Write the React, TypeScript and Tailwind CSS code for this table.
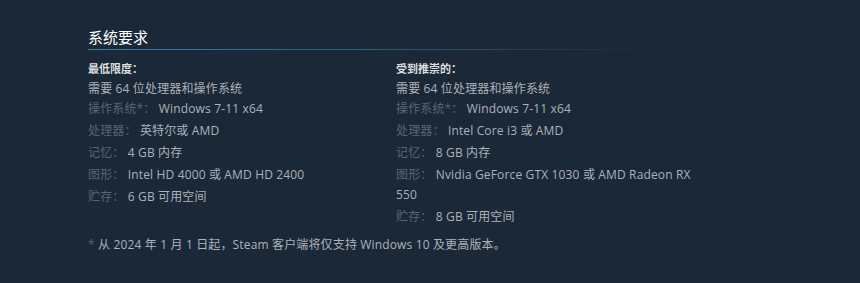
const minReqs: [string, string][] = [
  ["操作系统*：", "Windows 7-11 x64"],
  ["处理器：", "英特尔或 AMD"],
  ["记忆：", "4 GB 内存"],
  ["图形：", "Intel HD 4000 或 AMD HD 2400"],
  ["贮存：", "6 GB 可用空间"],
];

const recReqs: [string, string][] = [
  ["操作系统*：", "Windows 7-11 x64"],
  ["处理器：", "Intel Core i3 或 AMD"],
  ["记忆：", "8 GB 内存"],
  ["图形：", "Nvidia GeForce GTX 1030 或 AMD Radeon RX 550"],
  ["贮存：", "8 GB 可用空间"],
];

const ReqColumn = ({ title, rows }: { title: string; rows: [string, string][] }) => (
  <div className="pr-2">
    <div className="text-[11px] font-bold leading-5 tracking-normal text-[#dcdedf]">{title}</div>
    <ul>
      <li className="leading-5">需要 64 位处理器和操作系统</li>
      {rows.map(([label, value], i) => (
        <li key={label} className={i === 0 ? "leading-5" : "mt-[2px] leading-5"}>
          <span className="text-[#5c6570]">{label}</span> {value}
        </li>
      ))}
    </ul>
  </div>
);

export default function App() {
  return (
    <div
      className="w-[860px] h-[283px] bg-[#1b2838] pl-[88px] pt-[27px] text-[12px] tracking-[0.15px] text-[#acb2b8]"
      style={{ fontFamily: '"Open Sans", "Noto Sans CJK SC", sans-serif' }}
    >
      <div className="w-[616px]">
        <h2 className="text-[15px] leading-5 tracking-normal text-white pb-[2px]">系统要求</h2>
        <div className="h-px w-[572px] bg-gradient-to-r from-[#3b7ea4] via-[#2d5b78] to-transparent" />
        <div className="grid grid-cols-2 pt-[9px]">
          <ReqColumn title="最低限度：" rows={minReqs} />
          <ReqColumn title="受到推崇的：" rows={recReqs} />
        </div>
        <p className="mt-2 leading-5">
          <span className="text-[#5c6570]">*</span> 从 2024 年 1 月 1 日起，Steam 客户端将仅支持 Windows 10 及更高版本。
        </p>
      </div>
    </div>
  );
}
